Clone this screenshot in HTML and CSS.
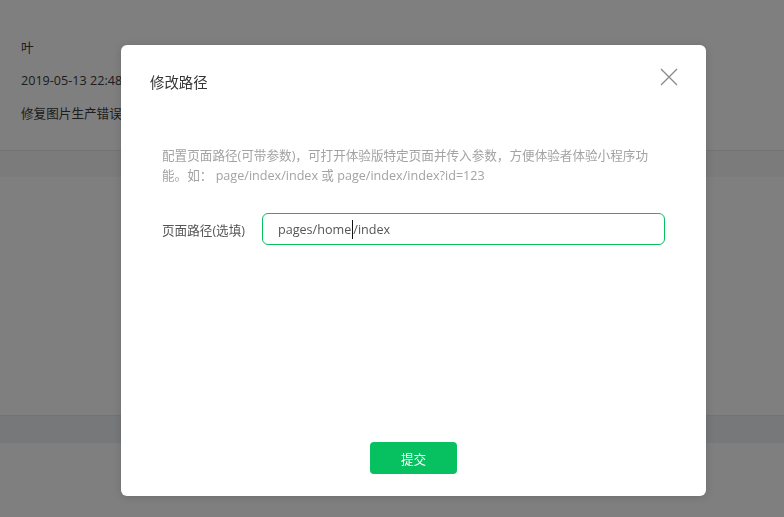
FILE: index.html
```html
<!DOCTYPE html>
<html lang="zh-CN">
<head>
<meta charset="utf-8">
<title>修改路径</title>
<link rel="stylesheet" href="styles.css">
</head>
<body>
<div class="page">
  <div class="record">
    <div class="rec-line">叶</div>
    <div class="rec-line">2019-05-13 22:48:16</div>
    <div class="rec-line">修复图片生产错误的问题</div>
  </div>
  <div class="band band-a"></div>
  <div class="blank"></div>
  <div class="band band-b"></div>
  <div class="blank2"></div>
</div>
<div class="mask"></div>
<div class="dialog">
  <div class="dialog-head">
    <h3 class="dialog-title">修改路径</h3>
    <span class="close" aria-label="关闭">
      <svg width="20" height="20" viewBox="0 0 20 20"><path d="M2 2 L18 18 M18 2 L2 18" stroke="#8a8a8a" stroke-width="1.3" fill="none"/></svg>
    </span>
  </div>
  <div class="dialog-body">
    <p class="desc">配置页面路径(可带参数)，可打开体验版特定页面并传入参数，方便体验者体验小程序功能。如：&nbsp;page/index/index 或 page/index/index?id=123</p>
    <div class="form-row">
      <label class="form-label">页面路径(选填)</label>
      <div class="input"><span>pages/home</span><span class="caret"></span><span>/index</span></div>
    </div>
  </div>
  <div class="dialog-foot">
    <button class="btn-primary">提交</button>
  </div>
</div>
</body>
</html>
```
FILE: styles.css
```css
html, body {
  margin: 0;
  padding: 0;
  width: 784px;
  height: 517px;
  overflow: hidden;
  font-family: "Open Sans", "Noto Sans CJK SC", sans-serif;
  background: #ffffff;
}
.page {
  display: flex;
  flex-direction: column;
  height: 517px;
}
.record {
  height: 151px;
  box-sizing: border-box;
  padding: 38px 0 0 21px;
  border-bottom: 1px solid #e8e8e8;
  display: flex;
  flex-direction: column;
  gap: 14px;
  color: #3a3a3a;
  font-size: 12.6px;
}
.rec-line {
  line-height: 19px;
  white-space: nowrap;
}
.band-a {
  height: 26px;
  background: #f6f6f6;
}
.blank {
  height: 238px;
  border-bottom: 1px solid #e6e6e6;
}
.band-b {
  height: 27px;
  background: #eef0f5;
}
.blank2 {
  flex: 1;
}
.mask {
  position: fixed;
  inset: 0;
  background: rgba(0, 0, 0, 0.5);
}
.dialog {
  position: absolute;
  left: 121px;
  top: 45px;
  width: 585px;
  height: 451px;
  box-sizing: border-box;
  background: #fff;
  border-radius: 6px;
  box-shadow: 0 1px 8px rgba(0, 0, 0, 0.15);
  display: flex;
  flex-direction: column;
  padding: 0 41px 0 29px;
}
.dialog-head {
  position: relative;
  padding-top: 28px;
  height: 20px;
}
.dialog-title {
  margin: 0;
  font-size: 14.4px;
  font-weight: normal;
  line-height: 20px;
  color: #353535;
}
.close {
  position: absolute;
  right: -14px;
  top: 22px;
  width: 20px;
  height: 20px;
}
.close svg {
  display: block;
}
.dialog-body {
  padding-left: 12px;
  flex: 1;
}
.desc {
  margin: 53px 0 0;
  font-size: 12.6px;
  line-height: 20px;
  color: #a3a3a3;
}
.form-row {
  display: flex;
  align-items: center;
  margin-top: 27px;
}
.form-label {
  width: 100px;
  font-size: 12.6px;
  color: #555;
  white-space: nowrap;
}
.input {
  flex: 1;
  height: 32px;
  box-sizing: border-box;
  border: 1px solid #07c160;
  border-radius: 6px;
  padding-left: 15px;
  display: flex;
  align-items: center;
  font-size: 12.6px;
  color: #555;
}
.caret {
  display: inline-block;
  width: 0;
  height: 19px;
  border-left: 1px solid #111;
  margin: 0 0 0 1px;
}
.dialog-foot {
  display: flex;
  justify-content: center;
  padding: 0 0 22px 0;
}
.btn-primary {
  width: 87px;
  height: 32px;
  border: 0;
  border-radius: 4px;
  background: #07c160;
  color: #fff;
  font-family: "Noto Sans CJK SC", sans-serif;
  font-size: 12.6px;
  font-weight: normal;
  margin-left: 12px;
}
```
